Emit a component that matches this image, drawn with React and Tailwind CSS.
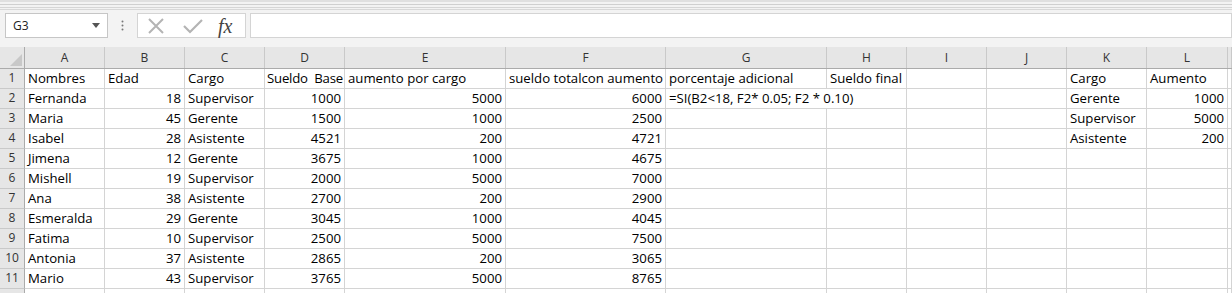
import React from 'react'

const cols = ['A', 'B', 'C', 'D', 'E', 'F', 'G', 'H', 'I', 'J', 'K', 'L', '']

// each row: [text, align] per column A..L ; 'r' = right aligned
const rows = [
  [['Nombres'], ['Edad'], ['Cargo'], ['Sueldo  Base', 'tight'], ['aumento por cargo'], ['sueldo totalcon aumento'], ['porcentaje adicional'], ['Sueldo final'], [''], [''], ['Cargo'], ['Aumento']],
  [['Fernanda'], ['18', 'r'], ['Supervisor'], ['1000', 'r'], ['5000', 'r'], ['6000', 'r'], ['=SI(B2<18, F2* 0.05; F2 * 0.10)', 'span'], [''], [''], ['Gerente'], ['1000', 'r']],
  [['Maria'], ['45', 'r'], ['Gerente'], ['1500', 'r'], ['1000', 'r'], ['2500', 'r'], [''], [''], [''], [''], ['Supervisor'], ['5000', 'r']],
  [['Isabel'], ['28', 'r'], ['Asistente'], ['4521', 'r'], ['200', 'r'], ['4721', 'r'], [''], [''], [''], [''], ['Asistente'], ['200', 'r']],
  [['Jimena'], ['12', 'r'], ['Gerente'], ['3675', 'r'], ['1000', 'r'], ['4675', 'r'], [''], [''], [''], [''], [''], ['']],
  [['Mishell'], ['19', 'r'], ['Supervisor'], ['2000', 'r'], ['5000', 'r'], ['7000', 'r'], [''], [''], [''], [''], [''], ['']],
  [['Ana'], ['38', 'r'], ['Asistente'], ['2700', 'r'], ['200', 'r'], ['2900', 'r'], [''], [''], [''], [''], [''], ['']],
  [['Esmeralda'], ['29', 'r'], ['Gerente'], ['3045', 'r'], ['1000', 'r'], ['4045', 'r'], [''], [''], [''], [''], [''], ['']],
  [['Fatima'], ['10', 'r'], ['Supervisor'], ['2500', 'r'], ['5000', 'r'], ['7500', 'r'], [''], [''], [''], [''], [''], ['']],
  [['Antonia'], ['37', 'r'], ['Asistente'], ['2865', 'r'], ['200', 'r'], ['3065', 'r'], [''], [''], [''], [''], [''], ['']],
  [['Mario'], ['43', 'r'], ['Supervisor'], ['3765', 'r'], ['5000', 'r'], ['8765', 'r'], [''], [''], [''], [''], [''], ['']],
  [[''], [''], [''], [''], [''], [''], [''], [''], [''], [''], [''], ['']],
]

const gridCols = 'grid grid-cols-[25px_80px_80px_80px_80px_161px_160px_161px_80px_80px_80px_80px_81px_1fr]'

function Toolbar() {
  return (
    <div className="h-[47px] bg-[#f3f3f3]">
      <div className="h-[10px] border-b border-[#d8d8d8] flex flex-col">
        <div className="h-[2px] bg-[#e0e0e0]" />
        <div className="h-[2px]" />
        <div className="h-[1px] bg-[#d0d0d0]" />
        <div className="h-[2px]" />
        <div className="h-[1px] bg-[#d6d6d6]" />
      </div>
      <div className="flex items-center h-[29px] pt-[2px]">
        <div className="ml-[5px] w-[103px] h-[25px] bg-white border border-[#c6c6c6] flex items-center justify-between pl-[7px] pr-[7px]">
          <span className="text-[12px] text-[#222]">G3</span>
          <svg width="8" height="5" viewBox="0 0 8 5"><path d="M0 0h8L4 5z" fill="#555" /></svg>
        </div>
        <div className="w-[29px] flex justify-center">
          <svg width="3" height="11" viewBox="0 0 3 11">
            <circle cx="1.5" cy="1.5" r="1" fill="#777" />
            <circle cx="1.5" cy="5.5" r="1" fill="#777" />
            <circle cx="1.5" cy="9.5" r="1" fill="#777" />
          </svg>
        </div>
        <div className="w-[109px] h-[25px] bg-white border border-[#d4d4d4] flex items-center">
          <svg className="ml-[9px]" width="18" height="18" viewBox="0 0 18 18">
            <path d="M2 2L16 16M16 2L2 16" stroke="#b4b4b4" strokeWidth="2" />
          </svg>
          <svg className="ml-[18px]" width="20" height="16" viewBox="0 0 20 16">
            <path d="M1 8L7 14L19 2" stroke="#b4b4b4" strokeWidth="2.2" fill="none" />
          </svg>
          <span className="ml-[15px] text-[20px] italic text-[#444] leading-none" style={{fontFamily: '"Liberation Serif", serif'}}>fx</span>
        </div>
        <div className="ml-[4px] flex-1 h-[25px] bg-white border border-[#d4d4d4]" />
      </div>
    </div>
  )
}

export default function App() {
  return (
    <div className="w-[1232px] h-[293px] overflow-hidden bg-white text-black" style={{fontFamily: '"Open Sans", sans-serif'}}>
      <Toolbar />
      <div className={`${gridCols} h-[22px] bg-[#e6e6e6] border-b border-[#ababab] text-[12px] text-[#333]`}>
        <div className="border-r border-[#ababab] flex items-end justify-end">
          <svg width="12" height="12" viewBox="0 0 12 12" className="mr-[2px] mb-[2px]"><path d="M12 0V12H0z" fill="#c8c8c8" /></svg>
        </div>
        {cols.map((c, i) => (
          <div key={i} className="border-r border-[#c9c9c9] flex items-center justify-center pt-[2px]">{c}</div>
        ))}
        <div />
      </div>
      {rows.map((r, ri) => (
        <div key={ri} className={`${gridCols} h-[20px] text-[13.2px]`}>
          <div className="bg-[#e6e6e6] border-r border-[#ababab] border-b border-b-[#c9c9c9] flex items-center justify-center text-[12px] text-[#333]">
            {ri < 11 ? ri + 1 : ''}
          </div>
          {r.map(([t, a], ci) => (
            <div
              key={ci}
              className={`border-r border-b border-[#d4d4d4] flex items-center whitespace-pre leading-none ${a === 'tight' ? 'pl-[2px] tracking-[-0.2px]' : 'px-[3px]'} ${a === 'r' ? 'justify-end' : ''} ${a === 'span' ? 'col-span-2' : ''}`}
            >
              {t}
            </div>
          ))}
          <div className="border-r border-b border-[#d4d4d4]" />
          <div />
        </div>
      ))}
    </div>
  )
}
